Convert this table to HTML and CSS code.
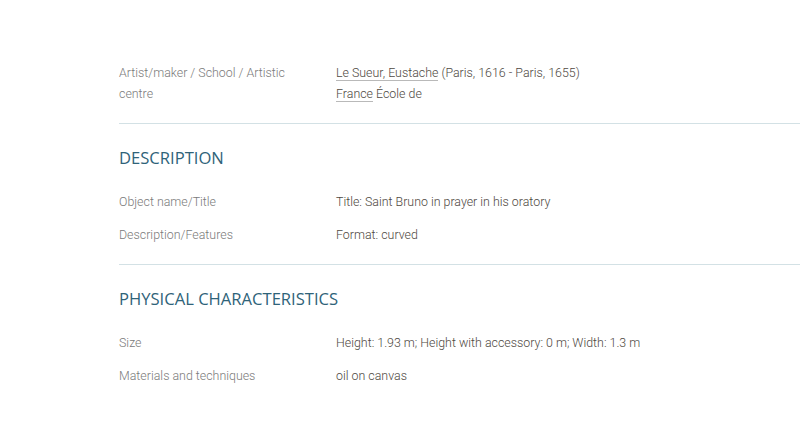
FILE: index.html
```html
<html>
	<head>
		<link rel="stylesheet" href="styles.css">
	</head>
<body>
<div class="record">

	<div class="section">
		<div class="row">
			<div class="label">Artist/maker / School / Artistic centre</div>
			<div class="value"><a href="#">Le Sueur, Eustache</a> (Paris, 1616 - Paris, 1655)<br><a href="#">France</a> École de</div>
		</div>
	</div>

	<div class="section">
		<h2 class="heading">DESCRIPTION</h2>
		<div class="row">
			<div class="label">Object name/Title</div>
			<div class="value">Title: Saint Bruno in prayer in his oratory</div>
		</div>
		<div class="row">
			<div class="label">Description/Features</div>
			<div class="value">Format: curved</div>
		</div>
	</div>

	<div class="section last">
		<h2 class="heading">PHYSICAL CHARACTERISTICS</h2>
		<div class="row">
			<div class="label">Size</div>
			<div class="value">Height: 1.93 m; Height with accessory: 0 m; Width: 1.3 m</div>
		</div>
		<div class="row">
			<div class="label">Materials and techniques</div>
			<div class="value">oil on canvas</div>
		</div>
	</div>

</div>
</body>
</html>
```

FILE: styles.css
```css
body{
	margin: 0px;
	background: #fff;
	font-family: Roboto, "Liberation Sans", sans-serif;
	font-weight: 300;
	font-size: 12.4px;
	line-height: 21px;
	overflow: hidden;
}

.record{
	padding-left: 119px;
}

.section{
	padding: 22px 0px 13px;
	border-bottom: 1px solid #d3e1e5;
}

.section:first-child{
	padding-top: 56px;
}

.section.last{
	border-bottom: none;
}

.heading{
	margin: 0px 0px 15px;
	font-family: "Open Sans", sans-serif;
	font-weight: 400;
	font-size: 16.6px;
	line-height: 24px;
	color: #2f6379;
}

.row{
	display: flex;
	padding: 6px 0px;
}

.label{
	width: 190px;
	margin-right: 27px;
	color: #7a7a7a;
}

.value{
	color: #4e4841;
}

.value a{
	color: #4e4841;
	text-decoration: none;
	border-bottom: 1px solid #b9b9b9;
}
```
